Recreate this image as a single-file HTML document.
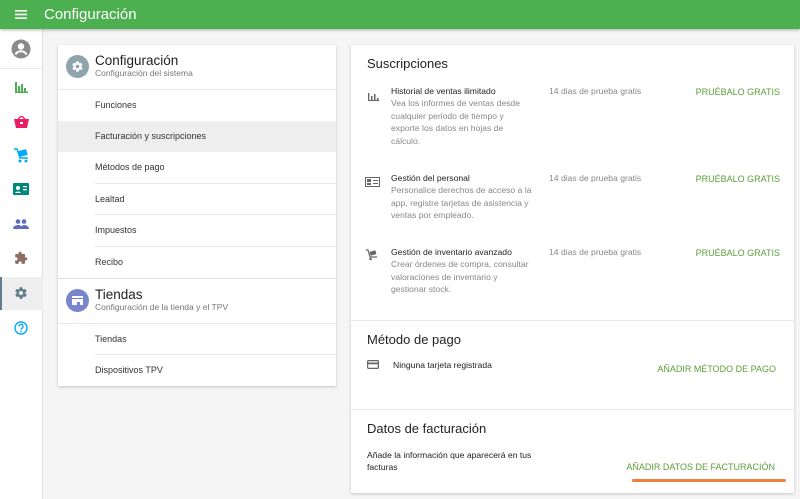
<!DOCTYPE html>
<html><head><meta charset="utf-8"><style>
*{box-sizing:border-box;margin:0;padding:0}
body{width:800px;height:499px;overflow:hidden;background:#f5f5f5;font-family:"Liberation Sans",sans-serif;position:relative}
.top{position:absolute;left:0;top:0;width:800px;height:29px;background:#4caf50;box-shadow:0 1px 3px rgba(0,0,0,.3);z-index:2}
.top .t{position:absolute;left:44px;top:6px;color:#fff;font-size:15px}
.side{position:absolute;left:0;top:29px;width:43px;height:470px;background:#fff;border-right:1px solid #e0e0e0}
.ic{position:absolute;left:12px}
.card{position:absolute;background:#fff;box-shadow:0 1px 3px rgba(0,0,0,.2)}
.it{position:absolute;left:37px;right:0;height:1px;background:#e8e8e8}
.lbl{position:absolute;left:37px;font-size:9px;color:#333}
.h1{position:absolute;left:37px;font-size:13.5px;color:#222}
.h2{position:absolute;left:37px;font-size:8.5px;color:#777}
.g{position:absolute;color:#5c9e3a;font-size:9px;white-space:nowrap;text-align:right}
.tt{position:absolute;font-size:8.6px;color:#222}
.d{position:absolute;font-size:8.6px;color:#888;line-height:12.5px;width:140px}
.s{position:absolute;font-size:8.6px;color:#888}
.sec{position:absolute;left:16px;font-size:13px;color:#222}
</style></head><body>
<div class="top"><svg style="position:absolute;left:15px;top:10px" width="12" height="9"><rect y="0" width="12" height="1.6" fill="#fff"/><rect y="3.7" width="12" height="1.6" fill="#fff"/><rect y="7.4" width="12" height="1.6" fill="#fff"/></svg><div class="t">Configuración</div></div>
<div class="side">
<svg class="ic" style="top:10px;left:11px" width="20" height="20" viewBox="0 0 20 20"><circle cx="10" cy="10" r="9.5" fill="#8a8a8a"/><circle cx="10" cy="7.5" r="3.2" fill="#fff"/><path d="M4.5 15.5c1.5-2.5 3.5-3.2 5.5-3.2s4 .7 5.5 3.2" stroke="#fff" stroke-width="2" fill="none"/></svg>
<div style="position:absolute;left:0;top:39px;width:43px;height:1px;background:#e8e8e8"></div>
<svg class="ic" style="top:53px;left:15px" width="13" height="11"><rect x="0" y="0" width="2" height="11" fill="#4caf50"/><rect x="3" y="4" width="2" height="7" fill="#4caf50"/><rect x="6" y="2" width="2" height="9" fill="#4caf50"/><rect x="9" y="6" width="2" height="5" fill="#4caf50"/><rect x="0" y="9.5" width="13" height="1.5" fill="#4caf50"/></svg>
<svg class="ic" style="top:87px;left:14px" width="15" height="12"><path d="M0 3h15l-2 9H2z" fill="#e91e63"/><path d="M4 3l3.5-3 3.5 3" stroke="#e91e63" stroke-width="1.4" fill="none"/><rect x="6" y="6" width="3" height="2" fill="#fff"/></svg>
<svg class="ic" style="top:119px;left:14px" width="15" height="15"><path d="M0 1h3l3 9h8" stroke="#03a9f4" stroke-width="1.5" fill="none"/><rect x="5" y="2" width="8" height="6" fill="#03a9f4" transform="rotate(-15 9 5)"/><circle cx="6" cy="13" r="1.5" fill="#03a9f4"/><circle cx="12" cy="13" r="1.5" fill="#03a9f4"/></svg>
<svg class="ic" style="top:154px;left:13px" width="16" height="12"><rect width="16" height="12" rx="1" fill="#00897b"/><circle cx="5" cy="5" r="2" fill="#fff"/><path d="M2 10c1-2 5-2 6 0z" fill="#fff"/><rect x="10" y="3" width="4" height="1.3" fill="#fff"/><rect x="10" y="6" width="4" height="1.3" fill="#fff"/></svg>
<svg class="ic" style="top:190px;left:13px" width="16" height="10"><circle cx="5" cy="2.5" r="2.3" fill="#5c6bc0"/><circle cx="11" cy="2.5" r="2.3" fill="#5c6bc0"/><path d="M0 10c0-3 3-4 5-4s5 1 5 4zM8 10c0-2 1-4 3-4s5 1 5 4z" fill="#5c6bc0"/></svg>
<svg class="ic" style="top:222px;left:14px" width="14" height="14" viewBox="0 0 24 24"><path fill="#8d6e63" d="M20.5 11H19V7c0-1.1-.9-2-2-2h-4V3.5a2.5 2.5 0 0 0-5 0V5H4c-1.1 0-2 .9-2 2v3.8h1.5c1.5 0 2.7 1.2 2.7 2.7S5 16.2 3.5 16.2H2V20c0 1.1.9 2 2 2h3.8v-1.5c0-1.5 1.2-2.7 2.7-2.7s2.7 1.2 2.7 2.7V22H17c1.1 0 2-.9 2-2v-4h1.5a2.5 2.5 0 0 0 0-5z"/></svg>
<div style="position:absolute;left:0;top:248px;width:43px;height:33px;background:#eeeeee;border-left:2px solid #607d8b"></div>
<svg class="ic" style="top:257px;left:14px" width="14" height="14" viewBox="0 0 24 24"><path fill="#607d8b" d="M19.4 13c0-.3.1-.7.1-1s0-.7-.1-1l2.1-1.6c.2-.2.2-.4.1-.6l-2-3.5c-.1-.2-.4-.3-.6-.2l-2.5 1c-.5-.4-1.1-.7-1.7-1l-.4-2.6c0-.3-.2-.4-.5-.4h-4c-.2 0-.4.2-.5.4l-.4 2.6c-.6.3-1.200.6-1.7 1l-2.5-1c-.2-.1-.5 0-.6.2l-2 3.5c-.1.2-.1.5.1.6L4.6 11c0 .3-.1.7-.1 1s0 .7.1 1l-2.1 1.6c-.2.2-.2.4-.1.6l2 3.5c.1.2.4.3.6.2l2.5-1c.5.4 1.1.7 1.7 1l.4 2.6c0 .2.2.4.5.4h4c.2 0 .4-.2.5-.4l.4-2.6c.6-.3 1.2-.6 1.7-1l2.5 1c.2.1.5 0 .6-.2l2-3.5c.1-.2.1-.5-.1-.6zM12 15.5a3.5 3.5 0 1 1 0-7 3.5 3.5 0 0 1 0 7z"/></svg>
<svg class="ic" style="top:292px;left:14px" width="14" height="14" viewBox="0 0 14 14"><circle cx="7" cy="7" r="6" stroke="#03a9f4" stroke-width="1.4" fill="none"/><path d="M5 5.5a2 2 0 1 1 2.8 1.8c-.6.3-.8.7-.8 1.4" stroke="#03a9f4" stroke-width="1.3" fill="none"/><circle cx="7" cy="10.3" r=".8" fill="#03a9f4"/></svg>
</div>

<div class="card" style="left:58px;top:45px;width:278px;height:341px">
<svg style="position:absolute;left:8px;top:10px" width="23" height="23" viewBox="0 0 24 24"><circle cx="12" cy="12" r="12" fill="#90a4ae"/><g transform="translate(5.5 5.5) scale(.54)"><path fill="#fff" d="M19.4 13c0-.3.1-.7.1-1s0-.7-.1-1l2.1-1.6c.2-.2.2-.4.1-.6l-2-3.5c-.1-.2-.4-.3-.6-.2l-2.5 1c-.5-.4-1.1-.7-1.7-1l-.4-2.6c0-.3-.2-.4-.5-.4h-4c-.2 0-.4.2-.5.4l-.4 2.6c-.6.3-1.2.6-1.7 1l-2.5-1c-.2-.1-.5 0-.6.2l-2 3.5c-.1.2-.1.5.1.6L4.6 11c0 .3-.1.7-.1 1s0 .7.1 1l-2.1 1.6c-.2.2-.2.4-.1.6l2 3.5c.1.2.4.3.6.2l2.5-1c.5.4 1.1.7 1.7 1l.4 2.6c0 .2.2.4.5.4h4c.2 0 .4-.2.5-.4l.4-2.6c.6-.3 1.2-.6 1.7-1l2.5 1c.2.1.5 0 .6-.2l2-3.5c.1-.2.1-.5-.1-.6zM12 15.5a3.5 3.5 0 1 1 0-7 3.5 3.5 0 0 1 0 7z"/></g></svg>
<div class="h1" style="top:8px">Configuración</div>
<div class="h2" style="top:23px">Configuración del sistema</div>
<div style="position:absolute;left:0;right:0;top:44px;height:1px;background:#e8e8e8"></div>
<div class="lbl" style="top:55px">Funciones</div>
<div style="position:absolute;left:0;right:0;top:76px;height:31px;background:#eeeeee"></div>
<div class="lbl" style="top:86px">Facturación y suscripciones</div>
<div class="lbl" style="top:117px">Métodos de pago</div>
<div class="it" style="top:138px"></div>
<div class="lbl" style="top:149px">Lealtad</div>
<div class="it" style="top:169px"></div>
<div class="lbl" style="top:180px">Impuestos</div>
<div class="it" style="top:201px"></div>
<div class="lbl" style="top:212px">Recibo</div>
<div style="position:absolute;left:0;right:0;top:233px;height:1px;background:#e0e0e0"></div>
<svg style="position:absolute;left:8px;top:244px" width="23" height="23"><circle cx="11.5" cy="11.5" r="11.5" fill="#7986cb"/><rect x="6" y="7" width="11" height="2" fill="#fff"/><path d="M6 10h11v6h-3v-3h-3v3H6z" fill="#fff"/></svg>
<div class="h1" style="top:242px">Tiendas</div>
<div class="h2" style="top:257px">Configuración de la tienda y el TPV</div>
<div style="position:absolute;left:0;right:0;top:278px;height:1px;background:#e8e8e8"></div>
<div class="lbl" style="top:289px">Tiendas</div>
<div class="it" style="top:309px"></div>
<div class="lbl" style="top:320px">Dispositivos TPV</div>
</div>

<div class="card" style="left:351px;top:45px;width:443px;height:448px">
<div class="sec" style="top:11px">Suscripciones</div>
<svg style="position:absolute;left:17px;top:48px" width="11" height="8"><rect x="0" y="0" width="1.3" height="8" fill="#666"/><rect x="3" y="3" width="1.5" height="5" fill="#666"/><rect x="6" y="1" width="1.5" height="7" fill="#666"/><rect x="9" y="5" width="1.5" height="3" fill="#666"/><rect y="7" width="11" height="1" fill="#666"/></svg>
<div class="tt" style="left:40px;top:41px">Historial de ventas ilimitado</div>
<div class="d" style="left:40px;top:52px">Vea los informes de ventas desde cualquier periodo de tiempo y exporte los datos en hojas de cálculo.</div>
<div class="s" style="left:198px;top:41px">14 dias de prueba gratis</div>
<div class="g" style="right:14px;top:42px">PRUÉBALO GRATIS</div>
<svg style="position:absolute;left:14px;top:132px" width="15" height="10"><rect x=".5" y=".5" width="14" height="9" fill="none" stroke="#666"/><rect x="2" y="2" width="4" height="3" fill="#666"/><rect x="2" y="6" width="4" height="2" fill="#666"/><rect x="8" y="3" width="5" height="1" fill="#666"/><rect x="8" y="6" width="5" height="1" fill="#666"/></svg>
<div class="tt" style="left:40px;top:128px">Gestión del personal</div>
<div class="d" style="left:40px;top:139px;width:145px">Personalice derechos de acceso a la app, registre tarjetas de asistencia y ventas por empleado.</div>
<div class="s" style="left:198px;top:128px">14 dias de prueba gratis</div>
<div class="g" style="right:14px;top:129px">PRUÉBALO GRATIS</div>
<svg style="position:absolute;left:15px;top:204px" width="12" height="12"><path d="M0 1h2l2 7h7" stroke="#666" stroke-width="1.2" fill="none"/><rect x="4" y="2" width="6" height="4" fill="#666" transform="rotate(-15 7 4)"/><circle cx="4.5" cy="10" r="1.3" fill="#666"/></svg>
<div class="tt" style="left:40px;top:202px">Gestión de inventario avanzado</div>
<div class="d" style="left:40px;top:213px">Crear órdenes de compra, consultar valoraciones de inventario y gestionar stock.</div>
<div class="s" style="left:198px;top:202px">14 dias de prueba gratis</div>
<div class="g" style="right:14px;top:203px">PRUÉBALO GRATIS</div>
<div style="position:absolute;left:0;right:0;top:275px;height:1px;background:#e8e8e8"></div>
<div class="sec" style="top:287px">Método de pago</div>
<svg style="position:absolute;left:16px;top:315px" width="12" height="9"><rect x=".6" y=".6" width="10.8" height="7.8" rx="1" fill="none" stroke="#666" stroke-width="1.2"/><rect x="1" y="2.5" width="10" height="1.8" fill="#666"/></svg>
<div class="tt" style="left:42px;top:315px">Ninguna tarjeta registrada</div>
<div class="g" style="right:18px;top:319px">AÑADIR MÉTODO DE PAGO</div>
<div style="position:absolute;left:0;right:0;top:364px;height:1px;background:#e8e8e8"></div>
<div class="sec" style="top:376px">Datos de facturación</div>
<div class="tt" style="left:16px;top:404px;line-height:12px;width:180px">Añade la información que aparecerá en tus facturas</div>
<div class="g" style="right:19px;top:417px">AÑADIR DATOS DE FACTURACIÓN</div>
<div style="position:absolute;left:281px;top:434px;width:154px;height:3px;border-radius:2px;background:#f0803c"></div>
</div>
</body></html>
